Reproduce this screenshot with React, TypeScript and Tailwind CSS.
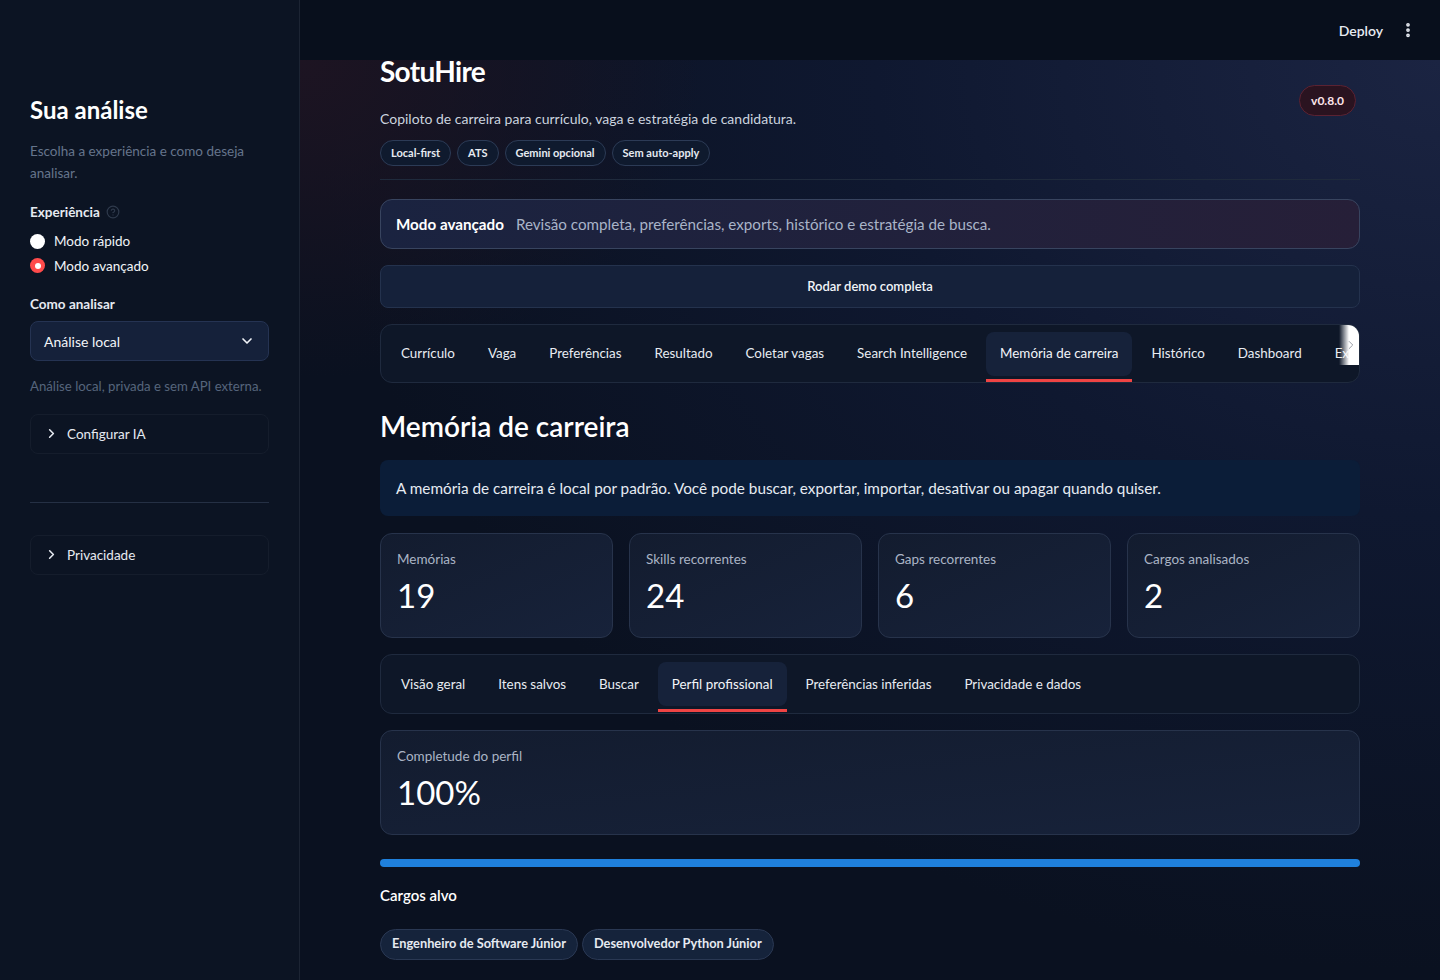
import { ChevronDown, ChevronRight, CircleHelp, EllipsisVertical } from 'lucide-react'

const font = { fontFamily: 'Lato, "Noto Sans", sans-serif' }

const mainTabs = [
  'Currículo',
  'Vaga',
  'Preferências',
  'Resultado',
  'Coletar vagas',
  'Search Intelligence',
  'Memória de carreira',
  'Histórico',
  'Dashboard',
  'Exportar',
]

const memoryTabs = ['Visão geral', 'Itens salvos', 'Buscar', 'Perfil profissional', 'Preferências inferidas', 'Privacidade e dados']

const stats = [
  { label: 'Memórias', value: '19' },
  { label: 'Skills recorrentes', value: '24' },
  { label: 'Gaps recorrentes', value: '6' },
  { label: 'Cargos analisados', value: '2' },
]

const Expander = ({ label }: { label: string }) => (
  <div className="flex h-[40px] items-center gap-[8px] rounded-lg border border-[#151d2c] px-[13px] text-[13.5px] text-[#e6eaf1]">
    <ChevronRight className="h-[15px] w-[15px]" strokeWidth={2.5} />
    <span>{label}</span>
  </div>
)

const Sidebar = () => (
  <aside className="flex w-[300px] shrink-0 flex-col border-r border-[#1c2433] bg-[#0c1423] px-[30px] pt-[95px]">
    <h2 className="text-[24px] font-bold leading-[30px] text-white">Sua análise</h2>
    <p className="mt-[15px] text-[13.5px] leading-[22px] text-[#66758c]">Escolha a experiência e como deseja analisar.</p>

    <div className="mt-[18px] flex items-center gap-[6px] text-[13.5px] font-bold text-[#e6eaf1]">
      Experiência
      <CircleHelp className="h-[14px] w-[14px] text-[#2f3a4c]" />
    </div>
    <div className="mt-[9px] flex flex-col gap-[4px] text-[13.5px] text-[#f1f4f8]">
      <label className="flex items-center gap-[9px]">
        <span className="h-[15px] w-[15px] rounded-full bg-white" />
        Modo rápido
      </label>
      <label className="flex items-center gap-[9px]">
        <span className="flex h-[15px] w-[15px] items-center justify-center rounded-full bg-[#ff4b4b]">
          <span className="h-[6px] w-[6px] rounded-full bg-white" />
        </span>
        Modo avançado
      </label>
    </div>

    <div className="mt-[18px] text-[13.5px] font-bold text-[#e6eaf1]">Como analisar</div>
    <div className="mt-[7px] flex h-[40px] items-center justify-between rounded-lg border border-[#253352] bg-[#15213a] px-[13px] text-[14px] text-[#f1f4f8]">
      <span>Análise local</span>
      <ChevronDown className="h-4 w-4" strokeWidth={2.5} />
    </div>
    <p className="mt-[16px] text-[13.2px] text-[#56657c]">Análise local, privada e sem API externa.</p>

    <div className="mt-[17px]">
      <Expander label="Configurar IA" />
    </div>
    <div className="mt-[48px] h-px bg-[#253044]" />
    <div className="mt-[32px]">
      <Expander label="Privacidade" />
    </div>
  </aside>
)

const TabBar = ({ tabs, active, overflow, tall }: { tabs: string[]; active: string; overflow?: boolean; tall?: boolean }) => (
  <div
    className={`relative flex items-center overflow-hidden rounded-xl border border-[#1f2a3e] bg-[#0e1728] px-[6px] ${
      tall ? 'h-[60px]' : 'h-[59px]'
    }`}
  >
    {tabs.map((tab) => (
      <div
        key={tab}
        className={`relative mr-[5px] flex h-[44px] shrink-0 items-center rounded-lg px-[14px] text-[13.4px] ${
          tab === active ? 'bg-[#16223a] text-[#f3f5f9]' : 'text-[#e8ecf2]'
        }`}
      >
        {tab}
        {tab === active ? <span className="absolute inset-x-0 -bottom-[6px] h-[3px] bg-[#ef4444]" /> : null}
      </div>
    ))}
    {overflow ? (
      <div className="absolute right-0 top-0 flex h-[40px] w-[20px] items-center justify-end bg-gradient-to-r from-[#0e1728]/0 via-white to-white pr-[1px]">
        <ChevronRight className="h-[14px] w-[14px] text-[#8a8f99]" strokeWidth={1.5} />
      </div>
    ) : null}
  </div>
)

const StatCard = ({ label, value, wide }: { label: string; value: string; wide?: boolean }) => (
  <div
    className={`flex h-[105px] flex-col rounded-xl border border-[#27334b] bg-gradient-to-br from-[#131c2f] to-[#17223a] px-[16px] pt-[15px] ${
      wide ? 'w-full' : ''
    }`}
  >
    <span className="text-[13.5px] text-[#aab4c5]">{label}</span>
    <span className="mt-[6px] text-[33px] leading-[40px] text-white">{value}</span>
  </div>
)

export default function App() {
  return (
    <div className="flex h-[980px] w-[1440px] overflow-hidden bg-[#0a1120]" style={font}>
      <Sidebar />
      <main className="flex flex-1 flex-col">
        <header className="flex h-[60px] shrink-0 items-center justify-end gap-[16px] bg-[#080f1c] pr-[23px]">
          <span className="text-[14px] font-semibold text-[#e6eaf1]">Deploy</span>
          <EllipsisVertical className="h-[18px] w-[18px] text-[#e6eaf1]" strokeWidth={3} />
        </header>

        <div className="flex-1 bg-[radial-gradient(ellipse_at_top_right,_#1b2442_0%,_#0f1830_35%,_#0a1120_70%)]">
          <div className="bg-[radial-gradient(ellipse_at_0%_0%,_#1d1422_0%,_transparent_25%)]">
            <div className="mx-[80px] flex flex-col">
              <div className="flex items-start justify-between">
                <div>
                  <h1 className="-mt-[10px] text-[28px] font-bold tracking-tight text-white">SotuHire</h1>
                  <p className="mt-[16px] text-[14px] text-[#cbd3df]">Copiloto de carreira para currículo, vaga e estratégia de candidatura.</p>
                  <div className="mt-[11px] flex gap-[6px]">
                    {['Local-first', 'ATS', 'Gemini opcional', 'Sem auto-apply'].map((p) => (
                      <span
                        key={p}
                        className="flex h-[26px] items-center rounded-full border border-[#2c3b56] bg-[#0f1a2e] px-[10px] text-[11px] font-bold text-[#e6eaf1]"
                      >
                        {p}
                      </span>
                    ))}
                  </div>
                </div>
                <span className="mr-[4px] mt-[25px] flex h-[31px] items-center rounded-full border border-[#5b2232] bg-[#2a1320] px-[11px] text-[12px] font-bold text-[#fde4ea]">
                  v0.8.0
                </span>
              </div>

              <div className="mt-[13px] h-px bg-[#1f2a3c]" />

              <div className="mt-[19px] flex h-[50px] items-center gap-[12px] rounded-xl border border-[#38445f] bg-gradient-to-r from-[#1a2340] to-[#261f38] px-[15px] text-[15.2px]">
                <span className="font-bold text-white">Modo avançado</span>
                <span className="text-[#a9b4c8]">Revisão completa, preferências, exports, histórico e estratégia de busca.</span>
              </div>

              <div className="mt-[16px] flex h-[43px] items-center justify-center rounded-lg border border-[#24324d] bg-[#15213a] text-[13px] font-semibold text-[#f1f4f8]">
                Rodar demo completa
              </div>

              <div className="mt-[16px]">
                <TabBar tabs={mainTabs} active="Memória de carreira" overflow />
              </div>

              <h2 className="mt-[25px] text-[28px] font-semibold leading-[36px] text-white">Memória de carreira</h2>

              <div className="mt-[16px] flex h-[56px] items-center rounded-lg bg-[#0b1d38] px-[16px] text-[15.3px] text-[#e6ebf2]">
                A memória de carreira é local por padrão. Você pode buscar, exportar, importar, desativar ou apagar quando quiser.
              </div>

              <div className="mt-[17px] grid grid-cols-4 gap-[16px]">
                {stats.map((s) => (
                  <StatCard key={s.label} label={s.label} value={s.value} />
                ))}
              </div>

              <div className="mt-[16px]">
                <TabBar tabs={memoryTabs} active="Perfil profissional" tall />
              </div>

              <div className="mt-[16px]">
                <StatCard label="Completude do perfil" value="100%" wide />
              </div>

              <div className="mt-[24px] h-[8px] rounded-full bg-[#1f80dc]" />

              <h3 className="mt-[17px] text-[15px] font-semibold text-white">Cargos alvo</h3>

              <div className="mt-[22px] flex gap-[4px]">
                {['Engenheiro de Software Júnior', 'Desenvolvedor Python Júnior'].map((p) => (
                  <span
                    key={p}
                    className="flex h-[31px] items-center rounded-full border border-[#2a3853] bg-[#15233b] px-[11px] text-[12.8px] font-bold text-[#e6eaf1]"
                  >
                    {p}
                  </span>
                ))}
              </div>
            </div>
          </div>
        </div>
      </main>
    </div>
  )
}
